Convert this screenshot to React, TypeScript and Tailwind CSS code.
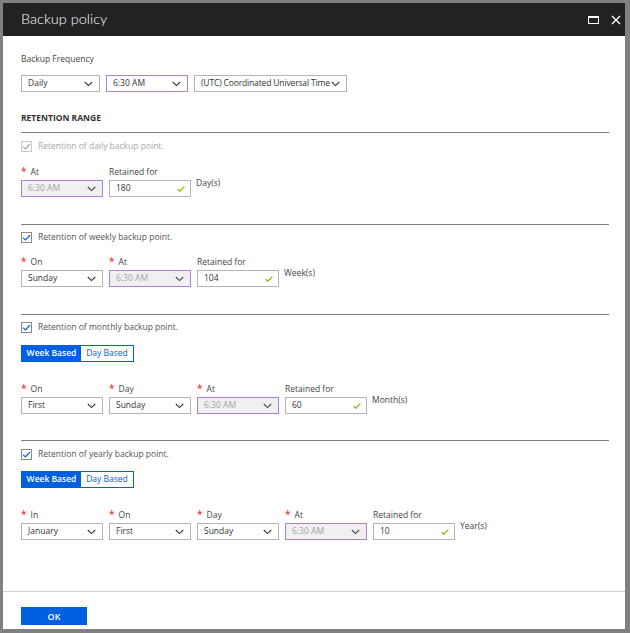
import React from "react";

const FONT = { fontFamily: '"Open Sans", "Noto Sans", sans-serif' };

function Chevron({ color = "#333" }: { color?: string }) {
  return (
    <svg width="9" height="6" viewBox="0 0 9 6" className="shrink-0">
      <polyline points="0.8,1 4.5,4.6 8.2,1" fill="none" stroke={color} strokeWidth="1.1" />
    </svg>
  );
}

function Select({
  value,
  w = "w-[82px]",
  disabled = false,
  purple = false,
}: {
  value: string;
  w?: string;
  disabled?: boolean;
  purple?: boolean;
}) {
  const border = purple ? "border-[#b07fd6]" : "border-[#b4b4b4]";
  const bg = disabled ? "bg-[#f0f0f0]" : "bg-white";
  const text = disabled ? "text-[#a3a3a3]" : "text-[#333]";
  return (
    <div className={`${w} h-[17px] border ${border} ${bg} flex items-center justify-between pl-[6px] pr-[6px]`}>
      <span className={`text-[8.5px] leading-none whitespace-nowrap ${text}`}>{value}</span>
      <Chevron color={disabled ? "#444" : "#333"} />
    </div>
  );
}

function Input({ value }: { value: string }) {
  return (
    <div className="w-[82px] h-[17px] border border-[#b4b4b4] bg-white flex items-center justify-between pl-[6px] pr-[5px]">
      <span className="text-[8.5px] leading-none text-[#333]">{value}</span>
      <svg width="8" height="6" viewBox="0 0 8 6">
        <polyline points="0.6,3.2 2.8,5.2 7.4,0.6" fill="none" stroke="#7fba00" strokeWidth="1.2" />
      </svg>
    </div>
  );
}

function Field({ label, required = false, children }: { label: string; required?: boolean; children: React.ReactNode }) {
  return (
    <div className="flex flex-col">
      <div className="h-[10px] flex items-center text-[8.5px] leading-none text-[#444] mb-[3px] whitespace-nowrap">
        {required && <span className="text-[#e81123] mr-[4px] text-[10px] leading-none relative top-[-1px]">*</span>}
        {label}
      </div>
      {children}
    </div>
  );
}

function Check({ label, disabled = false }: { label: string; disabled?: boolean }) {
  return (
    <div className="flex items-center h-[11px]">
      <div className={`w-[11px] h-[11px] border ${disabled ? "border-[#c8c8c8]" : "border-[#8a8a8a]"} bg-white flex items-center justify-center`}>
        <svg width="9" height="7" viewBox="0 0 9 7">
          <polyline points="1,3.6 3.4,6 8,1" fill="none" stroke={disabled ? "#a8a8a8" : "#0060df"} strokeWidth="1.2" />
        </svg>
      </div>
      <span className={`ml-[6px] text-[8.5px] leading-none ${disabled ? "text-[#a8a8a8]" : "text-[#555]"}`}>{label}</span>
    </div>
  );
}

function Toggle() {
  return (
    <div className="flex h-[17px] w-[113px] border border-[#0060df]">
      <div className="w-[59px] bg-[#0060df] text-white text-[8.5px] font-semibold flex items-center justify-center leading-none">
        Week Based
      </div>
      <div className="flex-1 bg-white text-[#0060df] text-[8.5px] flex items-center justify-center leading-none">Day Based</div>
    </div>
  );
}

function Unit({ text }: { text: string }) {
  return <div className="text-[8.5px] leading-none text-[#444] mt-[12px] ml-[-1px]">{text}</div>;
}

function Line() {
  return <div className="h-px bg-[#7d7d7d]" />;
}

export default function App() {
  return (
    <div style={FONT} className="w-[630px] h-[633px] bg-[#808080] pt-[3px] pl-[3px] pr-[5px] pb-[4px]">
      <div className="w-full h-full bg-white flex flex-col">
        {/* header */}
        <div className="h-[33px] bg-[#222222] flex items-center justify-between pl-[18px] pr-[4px]">
          <span className="text-[14.5px] text-white leading-none" style={{ fontFamily: 'Lato, "Open Sans", sans-serif', fontWeight: 300 }}>
            Backup policy
          </span>
          <div className="flex items-center gap-[12px]">
            <div className="w-[11px] h-[8px] border border-white border-t-2" />
            <svg width="10" height="10" viewBox="0 0 10 10">
              <path d="M1 1L9 9M9 1L1 9" stroke="white" strokeWidth="1.4" />
            </svg>
          </div>
        </div>

        {/* body */}
        <div className="flex-1 pl-[18px] pr-[16px] pt-[18px]">
          <div className="h-[10px] flex items-center text-[8.5px] leading-none text-[#444]">Backup Frequency</div>
          <div className="flex gap-[6px] mt-[11px]">
            <Select value="Daily" w="w-[79px]" />
            <Select value="6:30 AM" w="w-[82px]" purple />
            <div className="w-[153px] h-[17px] border border-[#b4b4b4] bg-white flex items-center pl-[6px] pr-[4px] gap-[1px]">
              <span className="text-[8.5px] leading-none whitespace-nowrap text-[#333] tracking-[-0.15px]">
                (UTC) Coordinated Universal Time
              </span>
              <Chevron />
            </div>
          </div>

          <div className="h-[10px] flex items-center text-[8.5px] leading-none font-bold text-[#333] mt-[21px]">
            RETENTION RANGE
          </div>
          <div className="mt-[9px]">
            <Line />
          </div>

          {/* daily */}
          <div className="mt-[8px]">
            <Check label="Retention of daily backup point." disabled />
          </div>
          <div className="flex gap-[6px] mt-[15px]">
            <Field label="At" required>
              <Select value="6:30 AM" disabled purple />
            </Field>
            <Field label="Retained for">
              <Input value="180" />
            </Field>
            <Unit text="Day(s)" />
          </div>

          <div className="mt-[27px]">
            <Line />
          </div>
          {/* weekly */}
          <div className="mt-[7px]">
            <Check label="Retention of weekly backup point." />
          </div>
          <div className="flex gap-[6px] mt-[14px]">
            <Field label="On" required>
              <Select value="Sunday" />
            </Field>
            <Field label="At" required>
              <Select value="6:30 AM" disabled purple />
            </Field>
            <Field label="Retained for">
              <Input value="104" />
            </Field>
            <Unit text="Week(s)" />
          </div>

          <div className="mt-[27px]">
            <Line />
          </div>
          {/* monthly */}
          <div className="mt-[7px]">
            <Check label="Retention of monthly backup point." />
          </div>
          <div className="mt-[12px]">
            <Toggle />
          </div>
          <div className="flex gap-[6px] mt-[22px]">
            <Field label="On" required>
              <Select value="First" />
            </Field>
            <Field label="Day" required>
              <Select value="Sunday" />
            </Field>
            <Field label="At" required>
              <Select value="6:30 AM" disabled purple />
            </Field>
            <Field label="Retained for">
              <Input value="60" />
            </Field>
            <Unit text="Month(s)" />
          </div>

          <div className="mt-[26px]">
            <Line />
          </div>
          {/* yearly */}
          <div className="mt-[8px]">
            <Check label="Retention of yearly backup point." />
          </div>
          <div className="mt-[11px]">
            <Toggle />
          </div>
          <div className="flex gap-[6px] mt-[22px]">
            <Field label="In" required>
              <Select value="January" />
            </Field>
            <Field label="On" required>
              <Select value="First" />
            </Field>
            <Field label="Day" required>
              <Select value="Sunday" />
            </Field>
            <Field label="At" required>
              <Select value="6:30 AM" disabled purple />
            </Field>
            <Field label="Retained for">
              <Input value="10" />
            </Field>
            <Unit text="Year(s)" />
          </div>
        </div>

        {/* footer */}
        <div className="border-t border-[#d0d0d0] pl-[18px] pt-[15px] pb-[4px]">
          <div className="w-[66px] h-[18px] bg-[#0060df] flex items-center justify-center text-white text-[9px] font-semibold leading-none">
            OK
          </div>
        </div>
      </div>
    </div>
  );
}
